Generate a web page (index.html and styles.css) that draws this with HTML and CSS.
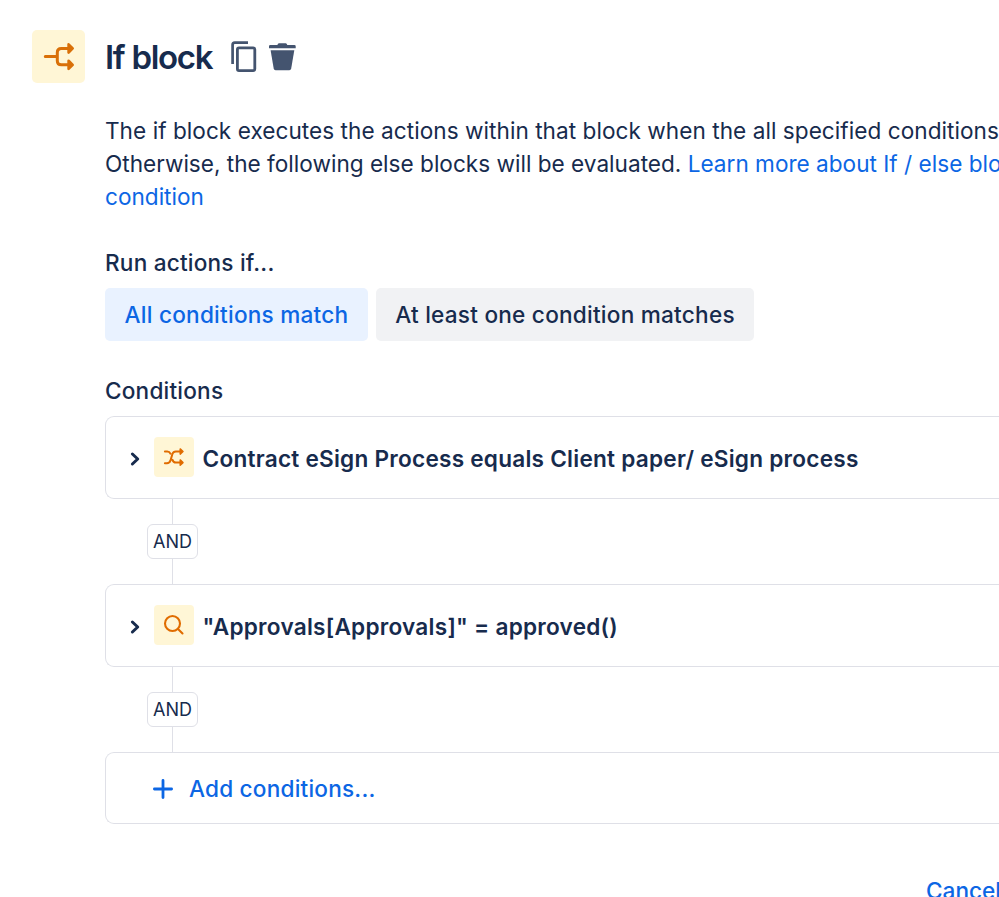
FILE: index.html
```
<!DOCTYPE html>
<html lang="en">
<head>
  <meta charset="UTF-8">
  <meta name="viewport" content="width=device-width, initial-scale=1.0">
  <title>If block</title>
  <link rel="stylesheet" href="styles.css">
</head>
<body>

  <div class="panel">
    <!-- Header -->
    <div class="header">
      <div class="block-icon">
        <svg width="53" height="53" viewBox="32 30 53 53" fill="none" stroke="#d97008" stroke-width="3" stroke-linecap="round" stroke-linejoin="round">
          <path d="M45.3 56.6H57M70 48.4H61.3Q57.3 48.4 57.3 52.4V60.8Q57.3 64.8 61.3 64.8H70"/>
          <path d="M68.6 44.3L72.7 48.4L68.6 52.5ZM68.6 60.7L72.7 64.8L68.6 68.9Z" fill="#d97008" stroke-width="2.6"/>
        </svg>
      </div>
      <h1>If block</h1>
      <div class="actions">
        <svg width="68" height="36" viewBox="230 38.8 68 36">
          <path d="M232.6 63.7V44.6Q232.6 42.4 234.8 42.4H248" fill="none" stroke="#44546f" stroke-width="2.7"/>
          <rect x="237.4" y="47.7" width="17.4" height="22.7" rx="1.6" fill="none" stroke="#44546f" stroke-width="2.8"/>
          <path d="M269 46Q269 44.7 270.3 44.7H277.4Q277.8 43 279 43H285.7Q286.9 43 287.3 44.7H294.4Q295.7 44.7 295.7 46V48H269Z" fill="#44546f"/>
          <path d="M270.6 50H294.3L291.2 68.4Q290.9 70 289.3 70H275.6Q274 70 273.7 68.4Z" fill="#44546f"/>
        </svg>
      </div>
    </div>

    <div class="content">
      <p class="description">
        <span class="intro">The if block executes the actions within that block when the all specified conditions</span><br>
        <span>Otherwise, the following else blocks will be evaluated.</span> <a href="#">Learn more about If / else block</a><br>
        <a href="#">condition</a>
      </p>

      <h2 class="run-label">Run actions if...</h2>
      <div class="toggle">
        <button class="btn selected">All conditions match</button>
        <button class="btn wide">At least one condition matches</button>
      </div>

      <h2 class="conditions-label">Conditions</h2>

      <!-- Condition list -->
      <div class="card">
        <svg class="chevron" width="10" height="16" viewBox="0 0 10 16"><path d="M2.4 3L7.7 8L2.4 13" fill="none" stroke="#172b4d" stroke-width="3" stroke-linecap="round" stroke-linejoin="round"/></svg>
        <div class="card-icon">
          <svg width="40" height="40" viewBox="154 437 40 40" fill="none" stroke="#e06c00" stroke-width="2" stroke-linecap="round" stroke-linejoin="round">
            <path d="M164.9 451.6H167.2Q169.5 451.6 170.4 453.7M172.5 459.9Q173.4 462.6 175.8 462.6H181M164.9 463.2H167Q169.5 463.2 170.4 460.7L172.5 453.8Q173.3 451.4 175.8 451.4H181"/>
            <path d="M180.2 448.9L183 451.5L180.2 454.1ZM180.2 459.9L183 462.6L180.2 465.2Z" fill="#e06c00" stroke-width="1.5"/>
          </svg>
        </div>
        <span class="card-title">Contract eSign Process equals Client paper/ eSign process</span>
      </div>

      <div class="join"><span>AND</span></div>

      <div class="card">
        <svg class="chevron" width="10" height="16" viewBox="0 0 10 16"><path d="M2.4 3L7.7 8L2.4 13" fill="none" stroke="#172b4d" stroke-width="3" stroke-linecap="round" stroke-linejoin="round"/></svg>
        <div class="card-icon">
          <svg width="40" height="40" viewBox="154 605 40 40" fill="none" stroke="#e06c00" stroke-width="2.1" stroke-linecap="round">
            <circle cx="172.5" cy="623.5" r="7.5"/>
            <path d="M178 629L182.5 633.5"/>
          </svg>
        </div>
        <span class="card-title">"Approvals[Approvals]" = approved()</span>
      </div>

      <div class="join"><span>AND</span></div>

      <div class="card add">
        <svg width="20" height="20" viewBox="0 0 20 20"><path d="M10 1.4V18.6M1.4 10H18.6" stroke="#0c66e4" stroke-width="2.8" stroke-linecap="round"/></svg>
        <span>Add conditions...</span>
      </div>

      <div class="footer">
        <a href="#">Cancel</a>
      </div>
    </div>
  </div>

</body>
</html>
```

FILE: styles.css
```
* {
  box-sizing: border-box;
}

body {
  font-family: Inter, "Liberation Sans", sans-serif;
  font-size: 22.6px;
  color: #172b4d;
  background-color: #fff;
  margin: 0;
}

.panel {
  height: 897px;
  padding: 30px 0 0 32px;
  overflow: hidden;
}

.header {
  display: flex;
  align-items: center;
  height: 53px;
}

.block-icon {
  width: 53px;
  height: 53px;
  background-color: #fff6d6;
  border-radius: 5px;
}

svg {
  display: block;
  flex-shrink: 0;
}

h1 {
  margin: 0 0 0 20px;
  width: 125px;
  font-size: 33px;
  font-weight: 600;
  letter-spacing: -1.3px;
  white-space: nowrap;
}

.content {
  margin-left: 73px;
}

.description {
  margin: 30.5px 0 0;
  line-height: 33.2px;
  white-space: nowrap;
}

.intro {
  letter-spacing: 0.04px;
}

a {
  color: #0c66e4;
  text-decoration: none;
}

h2 {
  margin: 0;
  font-size: 22.6px;
  font-weight: 500;
  line-height: 33px;
  letter-spacing: 0.2px;
}

.run-label {
  margin-top: 32.9px;
}

.toggle {
  display: flex;
  gap: 8px;
  margin-top: 9px;
}

.btn {
  width: 263px;
  height: 53px;
  padding: 0;
  font-family: inherit;
  font-size: 22.6px;
  font-weight: 500;
  letter-spacing: 0.23px;
  color: #172b4d;
  background-color: #f1f2f4;
  border: none;
  border-radius: 5px;
  white-space: nowrap;
}

.btn.selected {
  color: #0c66e4;
  background-color: #e9f2ff;
}

.btn.wide {
  width: 378px;
}

.conditions-label {
  margin-top: 33px;
}

.card {
  display: flex;
  align-items: center;
  height: 83px;
  padding: 2px 0 0 24px;
  border: 1px solid #dfe0e7;
  border-right: none;
  border-radius: 9px 0 0 9px;
}

.conditions-label + .card {
  margin-top: 9px;
}

.card-icon {
  width: 40px;
  height: 40px;
  margin: -3px 8.5px 0 14px;
  background-color: #fff6d6;
  border-radius: 4px;
}

.card-title {
  font-weight: 600;
  letter-spacing: 0.24px;
  white-space: nowrap;
}

/* vertical line behind the AND label */
.join {
  display: flex;
  align-items: center;
  justify-content: center;
  width: 51px;
  height: 85px;
  margin-left: 42px;
  background: linear-gradient(#dfe0e7, #dfe0e7) center / 1px 100% no-repeat;
}

.join span {
  width: 51px;
  height: 35px;
  line-height: 34px;
  font-size: 18px;
  text-align: center;
  background-color: #fff;
  border: 1px solid #dfe0e7;
  border-radius: 6px;
}

.card.add {
  height: 72px;
  padding: 1px 0 0 47px;
  gap: 16px;
  color: #0c66e4;
  font-weight: 500;
  letter-spacing: 0.2px;
}

.footer {
  margin: 50px 0 0 821px;
  line-height: 33px;
  font-weight: 500;
}
```
